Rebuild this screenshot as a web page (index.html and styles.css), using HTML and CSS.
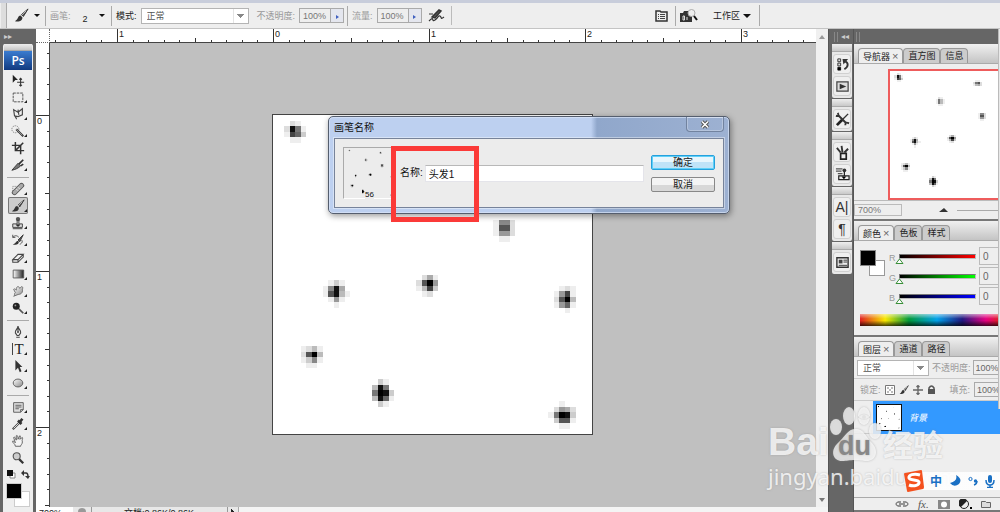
FILE: index.html
```html
<!DOCTYPE html>
<html lang="zh-CN">
<head>
<meta charset="utf-8">
<title>画笔名称</title>
<link rel="stylesheet" href="styles.css">
</head>
<body>
<svg class="defs" aria-hidden="true">
  <symbol id="dots" viewBox="0 0 58 58"><g id="dot-cells"></g></symbol>
  <linearGradient id="fade"><stop offset="0" stop-color="#fff"/><stop offset="1" stop-color="#222"/></linearGradient>
  <linearGradient id="metal" x2="1" y2="1"><stop offset="0" stop-color="#fff"/><stop offset="1" stop-color="#888"/></linearGradient>
  <symbol id="brush" viewBox="0 0 16 16"><path d="M15 1 8 7l2 2z" fill="#555" stroke="#333"/><path d="M7 8C4 8 5 12 1 14c4 1 8 0 8-4z" fill="#333"/><path d="m8 8 5-5" stroke="#bbb"/></symbol>
</svg>
<div class="app">
  <header class="options">
    <span class="grip"></span>
    <button class="flat preset" aria-label="画笔工具"><svg width="15" height="15"><use href="#brush"/></svg><i class="caret"></i></button>
    <div class="group brush-size"><span class="dim">画笔:</span><button class="flat size"><span class="tip">2</span><i class="caret"></i></button></div>
    <div class="group mode"><label for="mode">模式:</label><select id="mode" class="combo"><option>正常</option></select></div>
    <div class="group opacity"><label class="dim" for="opacity">不透明度:</label><span class="spin"><input id="opacity" value="100%"><button aria-label="不透明度滑块"><i></i></button></span></div>
    <div class="group flow"><label class="dim" for="flow">流量:</label><span class="spin"><input id="flow" value="100%"><button aria-label="流量滑块"><i></i></button></span>
      <button class="flat air" aria-label="喷枪"><svg width="17" height="16" viewBox="0 0 17 16"><path d="m4 9 7-7 2 1-6 7z" fill="#555" stroke="#333" stroke-width="1.500"/><path d="M1 6h4M1 13c6-6 2 2 6-1s3-5 5-4 0 4 4 1" fill="none" stroke="#333" stroke-width="1.200"/></svg></button></div>
    <div class="spacer"></div>
    <button class="flat palette" aria-label="调板"><svg width="13" height="13" viewBox="0 0 13 13"><path d="M1 2h4l1 1h6v9H1z" fill="#eee" stroke="#333" stroke-width="1.500"/><path d="M3 5.500h1m1 0h5M3 7.500h1m1 0h5M3 9.500h1m1 0h5" stroke="#444"/></svg></button>
    <div class="group work"><button class="flat" aria-label="转到 Bridge"><svg width="18" height="14" viewBox="0 0 18 14"><path d="M0 4h3l1-2h4l1 2h3v9H0z" fill="#333"/><circle cx="11.500" cy="4" r="3.500" fill="#eee" stroke="#aaa"/><path d="m14 7 3 4" stroke="#111" stroke-width="2"/><path d="M3 7v4h1.500V7zM7 8v3" stroke="#ddd" fill="none"/></svg></button><button class="flat workspace">工作区<i class="caret big"></i></button></div>
    <span class="tail"></span>
  </header>

  <main class="main">
    <aside class="toolbox">
      <div class="dock-head">▸▸</div>
      <div class="tools">
        <div class="grip-bar"></div>
        <div class="ps">Ps</div>
        <div class="tool-group">
          <button aria-label="移动"><svg viewBox="0 0 16 16"><path d="m2 2 6 6H5l-3 3z" fill="#222"/><path d="M11 6v9M7 10.500h8M9.500 7.500 11 6l1.500 1.500M9.500 13.500 11 15l1.500-1.500" stroke="#333" fill="none" stroke-width="1.200"/></svg></button>
          <button class="more" aria-label="选框"><svg viewBox="0 0 16 16"><path d="M2.500 3.500h11v10h-11z" fill="none" stroke="#444" stroke-dasharray="3 1"/></svg></button>
          <button class="more" aria-label="套索"><svg viewBox="0 0 16 16"><path d="m3 3 5 3 5-4v7l-5 2-4-1zM5 10c-1 2 2 2 1 4M8 3l1 6" fill="none" stroke="#444" stroke-width="1.300"/></svg></button>
          <button class="more" aria-label="快速选择"><svg viewBox="0 0 16 16"><circle cx="5" cy="6" r="4" fill="none" stroke="#777" stroke-dasharray="1.500 1"/><path d="m6 6 8 8" stroke="#333" stroke-width="2.300"/><path d="m6 6 7 7" stroke="#ccc" stroke-width=".7"/></svg></button>
          <button aria-label="裁剪"><svg viewBox="0 0 16 16"><path d="M5 1v10h10M1 5h10v10M5 11l9-9" fill="none" stroke="#333" stroke-width="1.700"/></svg></button>
          <button class="more" aria-label="切片"><svg viewBox="0 0 16 16"><path d="M1 14 8 6l3 3c-3 3-6 4-10 5z" fill="#777" stroke="#333"/><path d="m9 7 5-5M11 9l3-2" stroke="#333" stroke-width="2"/></svg></button>
        </div>
        <hr>
        <div class="tool-group">
          <button class="more" aria-label="修复画笔"><svg viewBox="0 0 16 16"><path d="M2 13V5h5" fill="none" stroke="#888" stroke-dasharray="1.500 1"/><path d="m4 12 8-8" stroke="#555" stroke-width="6" stroke-linecap="round"/><path d="m4 12 8-8" stroke="#aaa" stroke-width="4" stroke-linecap="round"/><path d="m6 8 2 2M8 6l2 2" stroke="#eee"/></svg></button>
          <button class="more active" aria-label="画笔" aria-pressed="true"><svg><use href="#brush"/></svg></button>
          <button class="more" aria-label="仿制图章"><svg viewBox="0 0 16 16"><circle cx="8" cy="3.500" r="2.500" fill="#555"/><path d="M7 5h2v4h4v4H2V9h5z" fill="#ddd" stroke="#333"/><path d="M6 10h4l-2 2zM2 14.500h11" fill="#111" stroke="#333"/></svg></button>
          <button class="more" aria-label="历史记录画笔"><svg viewBox="0 0 16 16"><path d="m14 2-6 6 2 2z" fill="#555" stroke="#333"/><path d="M8 9c-3 0-2 3-6 4 4 1 7 0 7-3z" fill="#333"/><path d="M2 5c3-3 5-2 7 0M2 2v3h3M12 8c2 2 0 4-2 5" fill="none" stroke="#444"/></svg></button>
          <button class="more" aria-label="橡皮擦"><svg viewBox="0 0 16 16"><path d="m2 11 6-6h6l-6 6zM2 11v3h6v-3M8 14l6-6V5" fill="#eee" stroke="#444" stroke-width="1.200"/></svg></button>
          <button class="more" aria-label="渐变"><svg viewBox="0 0 16 16"><path d="M2.500 3.500h12v9h-12z" fill="url(#fade)" stroke="#555"/></svg></button>
          <button class="more" aria-label="涂抹"><svg viewBox="0 0 16 16"><path d="M3 14c2-1 0-3 2-4L3 6c1-1 2 0 3 1 0-5 3-5 4-2 3-4 4-1 3 1 1 5-3 6-5 6z" fill="url(#metal)" stroke="#666"/></svg></button>
          <button class="more" aria-label="减淡"><svg viewBox="0 0 16 16"><circle cx="6" cy="6" r="4" fill="#222"/><path d="m9 9 5 5" stroke="#555" stroke-width="2"/><circle cx="5" cy="5" r="1" fill="#999"/></svg></button>
        </div>
        <hr>
        <div class="tool-group">
          <button class="more" aria-label="钢笔"><svg viewBox="0 0 16 16"><path d="M8 1c0 4 4 5 3 8l-2 3H7L5 9c-1-3 3-4 3-8zM6 14h4M8 3v5" fill="#eee" stroke="#444" stroke-width="1.300"/><circle cx="8" cy="8" r="1" fill="#333"/></svg></button>
          <button class="more type" aria-label="文字"><span>T</span></button>
          <button class="more" aria-label="路径选择"><svg viewBox="0 0 16 16"><path d="M5 1v12l3-3 2 5 2-1-2-5h3z" fill="#333"/></svg></button>
          <button class="more" aria-label="椭圆"><svg viewBox="0 0 16 16"><ellipse cx="8" cy="8" rx="5.500" ry="4.500" fill="url(#metal)" stroke="#555"/></svg></button>
        </div>
        <hr>
        <div class="tool-group">
          <button class="more" aria-label="注释"><svg viewBox="0 0 16 16"><path d="M3 3h11v8l-3 3H3zM11 14v-3h3M5 6h7M5 8h7M5 10h4" fill="#ddd" stroke="#555"/></svg></button>
          <button class="more" aria-label="吸管"><svg viewBox="0 0 16 16"><path d="m2 14 8-8" stroke="#444" stroke-width="2.500"/><path d="m3 13 6-6" stroke="#eee"/><path d="m8 4 4 4M10 6l3-4" stroke="#333" stroke-width="3"/></svg></button>
          <button aria-label="抓手"><svg viewBox="0 0 16 16"><path d="M5 14c0-3-4-4-3-6 1 0 2 1 3 2L3 4c1-1 2 0 3 3V2c1-1 2 0 2 4l2-4c1 0 1 1 0 4l3-2c1 1-1 3 0 5 0 3-2 3-2 5z" fill="#f4f4f4" stroke="#555"/></svg></button>
          <button aria-label="缩放"><svg viewBox="0 0 16 16"><path d="m9 9 5 5" stroke="#333" stroke-width="2.500"/><circle cx="6.500" cy="6" r="4" fill="#ccc" stroke="#555" stroke-width="1.300"/></svg></button>
        </div>
        <div class="mini"><svg width="9" height="9"><path d="M3 3h5v5H3z" fill="#fff" stroke="#888"/><path d="M0 0h6v6H0z" fill="#111"/></svg><svg width="9" height="9"><path d="M1 3h4q2 0 2 4" fill="none" stroke="#333" stroke-width="1.500"/><path d="m3 0-3 3 3 3zM4 6h5L7 9z" fill="#333"/></svg></div>
        <div class="swatches"><span class="fg"></span><span class="bg"></span></div>
        <hr class="last">
      </div>
    </aside>

    <section class="document">
      <div class="corner"></div>
      <svg class="ruler ruler-x"><g id="ruler-x"></g></svg>
      <svg class="ruler ruler-y"><g id="ruler-y"></g></svg>
      <div class="canvas">
        <div class="sheet"><svg><use href="#dots"/></svg></div>
        <form class="dialog" role="dialog" aria-labelledby="dialog-title">
          <div class="title"><span id="dialog-title">画笔名称</span><button type="button" class="close" aria-label="关闭"><svg width="10" height="9" viewBox="0 0 10 9"><path d="m2 1.500 6 6m0-6-6 6" stroke="#555" stroke-width="3.500"/><path d="m2 1.500 6 6m0-6-6 6" stroke="#fff" stroke-width="1.500"/></svg></button></div>
          <div class="client">
            <div class="preview"><svg><use href="#dots"/></svg><span>56</span></div>
            <label for="name">名称:</label>
            <input id="name" value="头发1">
            <div class="buttons"><button type="button" class="ok">确定</button><button type="button">取消</button></div>
          </div>
        </form>
        <div class="marker"></div>
      </div>
      <div class="vscroll"><i class="up"></i><i class="down"></i></div>
      <footer class="status"><span class="zoom">700%</span><span class="st-icon"></span><span class="doc-size">文档:0.86K/0.86K</span><i class="st-play"></i><span class="hscroll"></span></footer>
    </section>

    <aside class="dock">
      <div class="dock-head"><i class="bars"></i>◂◂</div>
      <div class="dock-group"><div class="grip-bar"></div>
        <button aria-label="历史记录"><svg viewBox="0 0 16 16"><path d="M3 2h3v3H3zM3 6.500h3v3H3zM3 11h3v3H3z" fill="#ddd" stroke="#333"/><path d="M3 11h3v3H3z"/><path d="M10 13c5-3 4-7 1-8" fill="none" stroke="#333" stroke-width="2"/><path d="M8 2h6L9 8z" fill="#333"/></svg></button>
        <button aria-label="动作"><svg viewBox="0 0 16 16"><path d="M2 3h12v10H2z" fill="#ddd" stroke="#444" stroke-width="1.300"/><path d="m5 5 7 3-7 3z" fill="#333"/></svg></button></div>
      <div class="dock-group"><div class="grip-bar"></div>
        <button aria-label="工具预设"><svg viewBox="0 0 16 16"><path d="m2 14 6-6" stroke="#222" stroke-width="3"/><path d="m14 2-6 6" stroke="#333" stroke-width="1.500"/><path d="m4 4 8 8M1 4c3 1 3-1 2-3M11 14c0-3 1-3 4-2" stroke="#333" stroke-width="2" fill="none"/></svg></button></div>
      <div class="dock-group"><div class="grip-bar"></div>
        <button aria-label="画笔"><svg viewBox="0 0 16 16"><path d="M6 9h6v6H6z" fill="#eee" stroke="#222" stroke-width="1.800"/><path d="M8 8 7 1M6 8 2 3M10 8l4-4" stroke="#333" stroke-width="2"/></svg></button>
        <button aria-label="仿制源"><svg viewBox="0 0 16 16"><path d="M1 2h7M1 4.500h6M3 7h5" stroke="#555" stroke-width="1.300"/><circle cx="10" cy="3.500" r="2" fill="#333"/><path d="M10 5v4M4 9.500h11v4H4z" fill="#eee" stroke="#222" stroke-width="1.300"/><path d="M7 10h5l-2.500 3z"/></svg></button></div>
      <div class="dock-group"><div class="grip-bar"></div>
        <button class="glyph" aria-label="字符">A|</button>
        <button class="glyph" aria-label="段落">¶</button></div>
      <div class="dock-group"><div class="grip-bar"></div>
        <button aria-label="图层复合"><svg viewBox="0 0 16 16"><path d="M2 3h12v10H2z" fill="#eee" stroke="#333" stroke-width="1.500"/><path d="M4 5h4v4H4z" fill="#444"/><path d="M9 5.500h4M9 7.500h4M4 11h9" stroke="#333"/></svg></button></div>
    </aside>

    <aside class="panels">
      <div class="dock-head"><i class="bars"></i></div>
      <section class="panel nav-panel">
        <nav class="tabs"><button class="on">导航器<b>×</b></button><button>直方图</button><button>信息</button></nav>
        <div class="navigator"><svg><use href="#dots"/></svg></div>
        <div class="nav-foot"><input aria-label="缩放比例" value="700%"><svg width="9" height="5"><path d="M0 4 5 0l4 4z" fill="#333"/></svg><span class="nav-line"></span></div>
      </section>
      <section class="panel color-panel">
        <nav class="tabs"><button class="on">颜色<b>×</b></button><button>色板</button><button>样式</button></nav>
        <div class="mixer">
          <div class="swatches"><span class="fg"></span><span class="bg"></span></div>
          <div class="channels">
            <div class="channel"><label for="r">R</label><span class="track red"><svg width="9" height="7"><path d="M1 5.500 4.500 1 8 5.500z" fill="#fff" stroke="#3a8f3a"/></svg></span><input id="r" value="0"></div>
            <div class="channel"><label for="g">G</label><span class="track green"><svg width="9" height="7"><path d="M1 5.500 4.500 1 8 5.500z" fill="#fff" stroke="#3a8f3a"/></svg></span><input id="g" value="0"></div>
            <div class="channel"><label for="b">B</label><span class="track blue"><svg width="9" height="7"><path d="M1 5.500 4.500 1 8 5.500z" fill="#fff" stroke="#3a8f3a"/></svg></span><input id="b" value="0"></div>
          </div>
        </div>
        <div class="spectrum"></div>
      </section>
      <section class="panel layer-panel">
        <nav class="tabs"><button class="on">图层<b>×</b></button><button>通道</button><button>路径</button></nav>
        <div class="row"><select class="combo" aria-label="混合模式"><option>正常</option></select><label class="dim" for="lo">不透明度:</label><input id="lo" value="100%"></div>
        <div class="row locks"><span class="dim">锁定:</span>
          <svg width="10" height="10"><path d="M.5.5h9v9h-9z" fill="#fff" stroke="#777"/><path d="M2 2h2v2H2zM6 2h2v2H6zM4 4h2v2H4zM2 6h2v2H2zM6 6h2v2H6z" fill="#bbb"/></svg>
          <svg width="10" height="10"><use href="#brush"/></svg>
          <svg width="10" height="10"><path d="M5 0v10M0 5h10M3.500 2 5 .5 6.500 2M3.500 8 5 9.500 6.500 8" stroke="#666" fill="none" stroke-width="1.300"/></svg>
          <svg width="9" height="10"><path d="M2 5V3q2.500-4 5 0v2" fill="none" stroke="#555" stroke-width="1.500"/><path d="M1 4h7v5H1z" fill="#555"/></svg>
          <label class="dim fill" for="lf">填充:</label><input id="lf" value="100%"></div>
        <div class="layer"><button class="eye" aria-label="可见性"><svg width="14" height="10"><path d="M1 5q6-6 12 0-6 5-12 0z" fill="#eee" stroke="#999"/><circle cx="7" cy="5" r="2" fill="#999"/></svg></button><div class="layer-name"><span class="thumb"><svg><use href="#dots"/></svg></span><em>背景</em></div></div>
        <div class="layer-space"></div>
        <div class="layer-foot">
          <svg width="14" height="8"><path d="M6 2H3q-4 2 0 4h3M8 2h3q4 2 0 4H8M4 4h6" fill="none" stroke="#777" stroke-width="1.300"/></svg>
          <span class="fx">fx.</span>
          <svg width="12" height="9"><path d="M0 0h12v9H0z" fill="#888"/><circle cx="6" cy="4.500" r="3" fill="#fff"/></svg>
          <svg width="13" height="10"><circle cx="5" cy="5" r="4.500" fill="#eee" stroke="#222"/><path d="M8 2A4.500 4.500 0 1 0 2 8z" fill="#222"/><path d="M11 8h2v2h-2z"/></svg>
          <svg width="10" height="8"><path d="M.5 1.500h4l1 1h4v5h-9z" fill="#ddd" stroke="#666"/></svg>
        </div>
      </section>
    </aside>
  </main>

  <div class="edge"></div>
  <div class="watermark">
    <div class="brand"><span class="bai">Bai</span>
      <span class="paw"><svg viewBox="0 0 54 56"><ellipse cx="7" cy="20" rx="6" ry="8"/><ellipse cx="20" cy="9" rx="6" ry="9"/><ellipse cx="35" cy="9" rx="6" ry="9"/><ellipse cx="46" cy="24" rx="6" ry="8"/><path d="M27 22c8 0 9 7 16 14 8 9 3 18-5 18-6 0-6-1-12-1s-8 1-13 1C4 54 1 44 8 37c8-7 10-15 19-15z"/></svg><b>du</b></span><span class="jing">经验</span></div>
    <div class="site">jingyan.baidu.com</div>
  </div>
  <div class="ime">
    <svg class="sogou" viewBox="0 0 22 22"><path d="M1 4q0-1 1-1L18 0q1 0 1 1l2 16q0 2-1 2L5 22q-1 0-1-1z" fill="#f4511e"/><path d="M17 5c-6-2-12 0-11 3s9 1 10 4-5 5-10 3" fill="none" stroke="#fff" stroke-width="3"/></svg>
    <span>中</span>
    <svg width="12" height="12"><path d="M7 0q2 6-6 8 4 5 9 1 4-5-3-9z" fill="#1a70c4"/></svg>
    <svg width="10" height="12"><circle cx="2.500" cy="4" r="1.600" fill="none" stroke="#1a70c4"/><circle cx="7.500" cy="6" r="1.700" fill="#1a70c4"/><path d="M9 6q0 3-3 4" fill="none" stroke="#1a70c4" stroke-width="1.500"/></svg>
    <svg width="10" height="13"><rect x="3" width="4" height="8" rx="2" fill="#1a70c4"/><path d="M1 5q0 5 4 5t4-5M5 10v3M2 12.500h6" fill="none" stroke="#1a70c4" stroke-width="1.500"/></svg>
    <svg width="10" height="10"><path d="M0 0h10v10H0z" fill="#1a70c4"/></svg>
  </div>
</div>
<script src="script.js"></script>
</body>
</html>
```

FILE: styles.css
```css
* { box-sizing: border-box; }
body, input, button, select {
  font-family: "Liberation Sans", "Noto Sans CJK SC", sans-serif;
  font-size: 9px;
  line-height: 12px;
  color: #222;
}
body { margin: 0; background: #eee; }
input, button, select { margin: 0; padding: 0; border: 0; border-radius: 0; background: none; outline: 0; min-width: 0; }
svg { display: block; flex: none; }
.defs { position: absolute; width: 0; height: 0; }
.app { position: relative; display: flex; flex-direction: column; height: 100vh; overflow: hidden; }
.dim { color: #999; }
.caret { display: inline-block; border: 3px solid transparent; border-top: 3px solid #111; border-bottom: 0; }
.caret.big { border-width: 4px 4px 0; }

/* Options bar */
.options { display: flex; align-items: stretch; flex: none; height: 29px; padding-left: 1px; border-top: 3px solid #c8cddb; border-bottom: 1px solid #c4c4c4; background: #eee; }
.grip { width: 6px; border-right: 1px solid #aaa; background: #ddd; }
.flat { display: flex; align-items: center; gap: 5px; }
.preset { width: 38px; padding-left: 7px; }
.group { display: flex; align-items: center; position: relative; }
.group::before { content: ""; align-self: center; width: 1px; height: 20px; background: #aaa; margin-right: 4px; }
.brush-size { width: 66px; }
.size { margin-left: 12px; gap: 11px; }
.tip { display: block; padding-top: 6px; }
.mode label { white-space: nowrap; }
.combo {
  appearance: none;
  height: 16px;
  padding-left: 5px;
  border: 1px solid #b4b4b4;
  color: #555;
  background:
    linear-gradient(to bottom left, #888 50%, transparent 50%) right 7px top 5px / 4px 4px no-repeat,
    linear-gradient(to bottom right, #888 50%, transparent 50%) right 3px top 5px / 4px 4px no-repeat,
    linear-gradient(#e4e4e4, #e4e4e4) right 14px top 0 / 1px 100% no-repeat,
    #fff;
}
.mode .combo { width: 108px; margin-left: 4px; }
.opacity { margin-left: 8px; }
.opacity::before { display: none; }
.opacity, .flow { gap: 4px; }
.flow { margin-left: 3px; }
.flow::before { margin-right: 0; }
.spin { display: flex; height: 15px; border: 1px solid #aaa; }
.spin input { width: 30px; padding-left: 3px; color: #777; }
.spin button { width: 13px; border-left: 1px solid #aaa; background: #e4e6ee; }
.spin i { display: inline-block; border: 2px solid transparent; border-left: 3px solid #4060c0; border-right: 0; }
.air { padding: 0 6px 0 2px; }
.spacer { flex: 1; border-left: 1px solid #bbb; margin: 3px 0; }
.palette { margin-right: 7px; }
.workspace { margin-left: 15px; gap: 3px; }
.work { padding-right: 8px; }
.tail { width: 241px; border-left: 1px solid #aaa; margin: 2px 0; }

/* Main split */
.main { display: flex; flex: 1; min-height: 0; }
.dock-head { height: 15px; flex: none; display: flex; align-items: center; color: #ccc; font: 8px/14px "DejaVu Sans", sans-serif; background: #666; }
.grip-bar { height: 7px; border-bottom: 1px solid #aaa; background: linear-gradient(#eee, #c8c8c8); }

/* Toolbox */
.toolbox { flex: none; width: 36px; padding: 0 3px; background: #666; }
.toolbox .dock-head { padding-left: 1px; }
.tools { background: #eee; padding: 0 1px; height: 100%; border-radius: 2px; }
.ps { height: 19px; margin-bottom: 1px; background: linear-gradient(#3a7cd0, #123a80); color: #fff; text-align: center; font: 600 12px/19px "Open Sans", "Liberation Sans", sans-serif; }
.tool-group { display: flex; flex-direction: column; }
.tool-group button { position: relative; height: 17px; margin: 0 4px; display: flex; justify-content: center; align-items: center; }
.tool-group svg { width: 14px; height: 14px; }
.more::after { content: ""; position: absolute; right: 1px; bottom: 2px; border-left: 3px solid transparent; border-bottom: 3px solid #222; }
.tool-group .active { background: #ccc; box-shadow: inset 0 0 0 1px #777; border-radius: 2px; }
.type { font: 15px/17px "Liberation Serif", serif; }
.type span { border-left: 1px solid #444; padding-left: 1px; line-height: 12px; }
.tools hr { height: 1px; border: 0; background: #aaa; margin: 4px 3px 2px; }
.mini { display: flex; gap: 5px; padding: 4px 3px 4px; }
.swatches { position: relative; flex: none; width: 26px; height: 26px; }
.tools .swatches { margin-left: 2px; }
.fg, .bg { position: absolute; width: 16px; height: 16px; border: 1px solid #ccc; }
.fg { left: 0; top: 0; z-index: 1; background: #000; }
.bg { left: 8px; top: 8px; background: #fff; }

/* Document window */
.document { flex: 1; min-width: 0; display: grid; grid-template: 14px minmax(0, 1fr) 5px / 14px minmax(0, 1fr) 12px; }
.corner { background: #fff; border-right: 1px dotted #666; border-bottom: 1px dotted #666; }
.ruler { width: 100%; height: 100%; background: #fff; overflow: hidden; font-size: 9px; fill: #222; }
.ruler rect { fill: #333; }
.ruler-x { grid-area: 1 / 2; border-bottom: 1px solid #444; }
.ruler-y { grid-area: 2 / 1; border-right: 1px solid #444; }
.canvas { grid-area: 2 / 2; position: relative; overflow: hidden; background: #c0c0c0; }
.vscroll { grid-area: 1 / 3 / 3; display: flex; flex-direction: column; justify-content: space-between; align-items: center; padding: 6px 0 5px; background: #f0f0f0; }
.up, .down { border: 3px solid transparent; }
.up { border-bottom: 4px solid #999; border-top: 0; }
.down { border-top: 4px solid #777; border-bottom: 0; }
.status { grid-area: 3 / 1 / 4 / 4; display: flex; overflow: hidden; background: #e8e8e8; }
.zoom { width: 37px; padding-left: 3px; background: #fff; }
.st-icon { width: 8px; height: 8px; margin: 1px 5px; border-radius: 50%; background: #999; }
.doc-size { width: 136px; padding-left: 32px; border-left: 1px solid #999; white-space: nowrap; }
.st-play { width: 11px; border-left: 1px solid #999; background: linear-gradient(45deg, #222 50%, transparent 50%) 3px 1px / 4px 4px no-repeat; }
.hscroll { flex: 1; border-left: 1px solid #aaa; background: #f4f4f4; }
.sheet { position: absolute; left: 222px; top: 71px; width: 321px; border: 1px solid #444; background: #fff; }
.sheet svg { width: 100%; height: auto; aspect-ratio: 1; }

/* Dialog */
.dialog { position: absolute; left: 278px; top: 73px; width: 402px; padding: 0 5px 5px; border: 1px solid #555e6e; border-radius: 5px; background: linear-gradient(90deg, #bdd0f0 262px, #90a7cb 268px, #9db1d2); box-shadow: inset 0 0 0 1px #dbe6f8aa, 1px 2px 6px #0006; font-size: 10px; color: #111; }
.title { display: flex; justify-content: space-between; height: 21px; line-height: 21px; }
.close { width: 38px; height: 15px; display: flex; justify-content: center; align-items: center; border: 1px solid #72839f; border-top: 0; border-radius: 0 0 4px 4px; box-shadow: inset 0 0 0 1px #ffffff44; }
.client { display: flex; align-items: center; height: 70px; padding: 0 8px; border: 1px solid #77839a; background: #ececec; box-shadow: 0 0 0 1px #ffffff66; }
.preview { position: relative; width: 50px; height: 52px; border: 1px solid #aaa; border-right-color: #fff; border-bottom-color: #fff; }
.preview svg { width: 54px; height: 50px; }
.preview span { position: absolute; left: 21px; bottom: -2px; font-size: 8px; background: #ececec; line-height: 10px; }
.client label { margin-left: 7px; white-space: nowrap; }
.client input { flex: 1; height: 17px; margin: 0 7px 0 2px; padding-left: 3px; background: #fff; border: 1px solid #e4e4ea; border-top-color: #b8b8b8; font-size: 10px; color: #111; }
.buttons { display: flex; flex-direction: column; gap: 7px; width: 64px; }
.buttons button { height: 15px; border: 1px solid #888; border-radius: 2px; background: linear-gradient(#f4f4f4 50%, #d8d8d8 50%); font-size: 10px; line-height: 13px; }
.buttons .ok { border: 1px solid #26a0dc; box-shadow: inset 0 0 0 1px #5fd0f8; background: linear-gradient(#e8f6fd 50%, #bfe3f8 50%); }
.marker { position: absolute; left: 341px; top: 103px; width: 88px; height: 76px; border: 5px solid #fb3a38; }

/* Icon dock */
.dock { flex: none; width: 25px; padding: 0 1px 0 3px; background: #666; border-left: 1px solid #555; display: flex; flex-direction: column; gap: 1px; }
.dock .dock-head { margin-bottom: -1px; gap: 3px; }
.bars { width: 4px; height: 10px; border: 1px solid #888; border-width: 0 1px; margin-left: 2px; }
.dock-group { display: flex; flex-direction: column; gap: 2px; padding-bottom: 2px; border-radius: 2px; background: #e8e8e8; }
.dock-group .grip-bar { height: 8px; }
.dock-group button { height: 20px; margin: 0 1px; display: flex; align-items: center; justify-content: center; border: 1px solid #d0d0d0; border-radius: 3px; background: #efefef; }
.dock-group svg { width: 15px; height: 15px; }
.dock-group .glyph { font-size: 14px; color: #333; }

/* Panels */
.panels { flex: none; width: 147px; display: flex; flex-direction: column; overflow: hidden; background: #666; border-left: 1px solid #555; }
.panel { flex: none; background: #eee; border-bottom: 2px solid #777; }
.tabs { display: flex; align-items: flex-end; height: 20px; padding-left: 4px; border-bottom: 1px solid #aaa; background: linear-gradient(#f0f0f0, #c4c4c4); }
.tabs button { height: 15px; padding: 0 4px; border: 1px solid #999; border-bottom: 0; border-radius: 4px 4px 0 0; background: #ccc; white-space: nowrap; }
.tabs .on { background: #eee; }
.tabs b { font-weight: normal; font-size: 11px; color: #666; margin-left: 2px; }
.navigator { width: 132px; margin: 5px 0 0 34px; border: 2px solid #ee5c5c; background: #fff; }
.navigator svg { width: 127px; height: 127px; }
.nav-foot { display: flex; align-items: center; height: 19px; border-top: 1px solid #bbb; }
.nav-foot input { width: 48px; height: 12px; border: 1px solid #bbb; padding-left: 3px; margin-right: 37px; color: #777; }
.nav-line { flex: 1; height: 1px; margin-left: 9px; background: #aaa; }
.mixer { display: flex; height: 71px; }
.mixer .swatches { margin: 9px 3px 0 6px; }
.mixer .fg { border-color: #888; }
.mixer .bg { border-color: #999; left: 9px; top: 10px; }
.channels { display: flex; flex: none; flex-direction: column; padding-top: 6px; }
.channel { display: flex; gap: 3px; height: 20px; width: 130px; }
.channel label { width: 7px; margin-top: 5px; color: #999; }
.track { position: relative; width: 77px; height: 5px; margin-top: 7px; border: 1px solid #777; border-color: #777 #bbb #bbb #777; }
.track svg { position: absolute; left: -5px; top: 3px; }
.red { background: linear-gradient(90deg, #000, #f00); }
.green { background: linear-gradient(90deg, #000, #0f0); }
.blue { background: linear-gradient(90deg, #000, #00f); }
.channel input { width: 36px; height: 18px; padding-left: 3px; border: 1px solid #bbb; color: #666; font-size: 10px; }
.spectrum { height: 12px; margin: 2px 0 9px 6px; background: linear-gradient(#fff8, transparent 40%, #0000 55%, #000b), linear-gradient(90deg, #e02020, #f8e800 18%, #00983a 35%, #00a0e8 55%, #201880 73%, #e4007f 90%, #e02020); }
.layer-panel { flex: 1; min-height: 0; display: flex; flex-direction: column; }
.layer-panel .tabs { flex: none; }
.row { display: flex; align-items: center; flex: none; height: 22px; padding-left: 3px; border-bottom: 1px solid #ccc; white-space: nowrap; width: 170px; }
.row .combo { width: 72px; margin-right: 3px; }
.row input { width: 40px; height: 15px; padding-left: 2px; margin-left: 2px; border: 1px solid #aaa; color: #666; }
.locks { gap: 4px; padding-left: 6px; }
.locks input { margin-left: 0; }
.locks .fill { margin-left: 10px; }
.layer { display: flex; flex: none; height: 33px; }
.eye { flex: none; width: 19px; display: flex; align-items: center; justify-content: center; border-bottom: 1px solid #ccc; }
.layer-name { flex: 1; display: flex; align-items: center; gap: 7px; padding-left: 3px; background: #3399ff; color: #fff; }
.thumb { flex: none; width: 26px; height: 27px; border: 1px solid #111; background: #fff; }
.thumb svg { width: 24px; height: 25px; }
.layer-space { flex: 1; }
.layer-foot { display: flex; align-items: center; gap: 9px; flex: none; height: 13px; padding-left: 41px; border-top: 1px solid #aaa; }
.fx { font: italic 11px/10px "Liberation Serif", serif; color: #555; }
.edge { position: absolute; right: 0; top: 29px; width: 2px; height: 380px; background: #e8e8e8; border-left: 1px solid #bbb; }

/* Overlays */
.watermark { position: absolute; left: 768px; top: 406px; color: #ffffffcc; white-space: nowrap; text-shadow: 0 0 2px #8888; pointer-events: none; }
.brand { display: flex; align-items: flex-end; height: 57px; }
.bai { font: bold 39px/42px "Liberation Sans", sans-serif; width: 61px; }
.paw { position: relative; width: 54px; height: 56px; }
.paw svg { width: 54px; height: 56px; fill: #ffffffbb; filter: drop-shadow(0 0 1px #888a); overflow: visible; }
.paw b { position: absolute; left: 9px; bottom: 3px; font: bold 27px/28px "Liberation Sans", sans-serif; color: #888; }
.jing { font: bold 30px/40px "Noto Sans CJK SC", sans-serif; }
.site { font: 22px/26px "Noto Sans", sans-serif; }
.ime { position: absolute; left: 903px; top: 470px; right: 0; height: 22px; display: flex; align-items: center; gap: 7px; color: #1a70c4; overflow: hidden; background: linear-gradient(#fffd, #fffd) 14px 2px no-repeat; background-size: 100% 18px; }
.ime span { font: bold 12px/18px "Noto Sans CJK SC", sans-serif; margin-left: -2px; }
.sogou { width: 22px; height: 22px; }
```

FILE: script.js
```js
const SVG = "http://www.w3.org/2000/svg";

function add(parent, name, attrs, text) {
  const el = document.createElementNS(SVG, name);
  for (const key in attrs) el.setAttribute(key, attrs[key]);
  if (text !== undefined) el.textContent = text;
  parent.appendChild(el);
}

// Brush dots: column, row, then one hex digit of darkness per pixel.
const blobs = [
  [2, 1, "0210", "2e81", "1b93", "0110"],
  [38, 4, "0110", "28a2", "1452"],
  [21, 12, "0210", "1841", "1841", "0110"],
  [40, 19, "1772", "1aa2", "1662", "0110"],
  [9, 30, "01310", "17e50", "1ae41", "01610", "00100"],
  [26, 29, "02510", "2af60", "14b30", "01200"],
  [51, 31, "0121", "16b1", "2af4", "1691", "0010"],
  [5, 42, "1241", "2af4", "1371", "0110"],
  [18, 48, "0310", "4e80", "8fe3", "4e91", "0310"],
  [50, 52, "00100", "02652", "18fe3", "03aa1", "00110"]
];
const cells = document.getElementById("dot-cells");
cells.setAttribute("shape-rendering", "crispEdges");
for (const [col, row, ...lines] of blobs) {
  lines.forEach((line, y) => [...line].forEach((digit, x) => {
    const level = parseInt(digit, 16);
    if (level) add(cells, "rect", { x: col + x, y: row + y, width: 1, height: 1, "fill-opacity": level / 15 });
  }));
}

// Ruler marks: ten divisions per unit, zero at the sheet's corner.
const UNIT = 156;
function ruler(id, zero, vertical) {
  const g = document.getElementById(id);
  for (let n = -20; n < 120; n++) {
    const at = zero + Math.round(n * UNIT / 10);
    const size = n % 10 === 0 ? 14 : n % 5 === 0 ? 4 : 2;
    add(g, "rect", vertical
      ? { x: 13 - size, y: at, width: size, height: 1 }
      : { x: at, y: 13 - size, width: 1, height: size });
    if (n % 10 === 0) {
      add(g, "text", vertical ? { x: 1, y: at + 9 } : { x: at + 2, y: 8 }, Math.abs(n / 10));
    }
  }
}
ruler("ruler-x", 223, false);
ruler("ruler-y", 72, true);
```
